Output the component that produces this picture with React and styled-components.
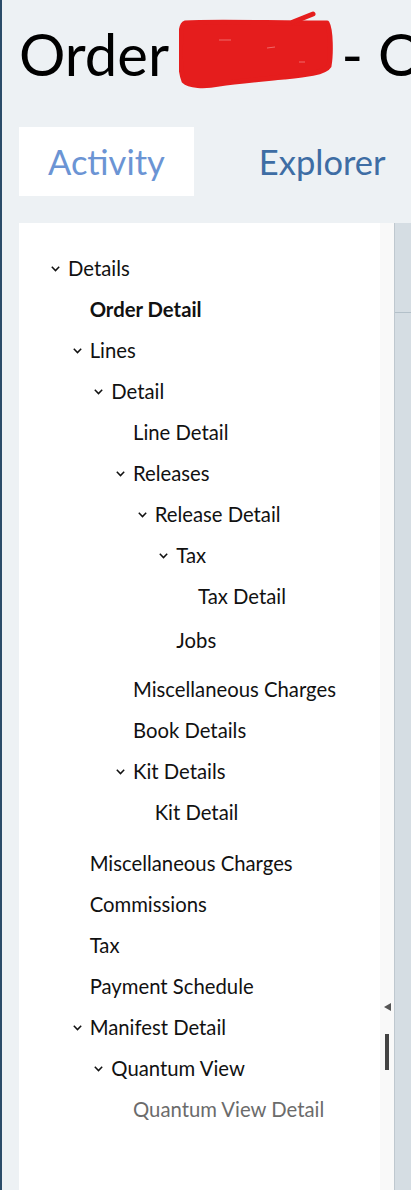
import React from "react";
import styled, { createGlobalStyle } from "styled-components";

const GlobalStyle = createGlobalStyle`
  html, body { margin: 0; padding: 0; }
  body { background: #edf1f4; font-family: Lato, "Open Sans", sans-serif; }
  * { box-sizing: border-box; }
`;

const Page = styled.div`
  height: 100vh;
  display: flex;
  flex-direction: column;
  border-left: 2px solid #2b4c69;
  padding-left: 17px;
  overflow: hidden;
  background: #edf1f4;
`;

const Title = styled.h1`
  margin: 0;
  padding-top: 20px;
  display: flex;
  align-items: flex-start;
  white-space: pre;
  font-family: Lato, sans-serif;
  font-weight: 400;
  font-size: 58px;
  line-height: 68px;
  color: #000;
`;

const Redaction = styled.svg`
  flex: none;
  margin-left: -4px;
  margin-right: -6px;
  margin-top: -10px;
`;

const Tabs = styled.div`
  display: flex;
  gap: 36px;
  margin-top: 37px;
`;

const Tab = styled.div`
  height: 69px;
  display: flex;
  align-items: center;
  padding: 0 29px;
  font-family: Lato, sans-serif;
  font-size: 34.5px;
  color: ${(p) => (p.$active ? "#6b94d4" : "#3e6da4")};
  background: ${(p) => (p.$active ? "#ffffff" : "transparent")};
`;

const Workspace = styled.div`
  flex: 1;
  display: flex;
  margin-top: 27px;
  min-height: 0;
`;

const TreePanel = styled.div`
  width: 361px;
  flex: none;
  background: #ffffff;
  padding-top: 25px;
`;

const Splitter = styled.div`
  width: 14px;
  flex: none;
  background: #f9f9f9;
  display: flex;
  flex-direction: column;
  padding-top: 780px;
`;

const CollapseArrow = styled.div`
  margin-left: 4px;
  width: 0;
  height: 0;
  border-top: 4px solid transparent;
  border-bottom: 4px solid transparent;
  border-right: 7px solid #555;
`;

const Grip = styled.div`
  margin-left: 5px;
  margin-top: 23px;
  width: 4px;
  height: 36px;
  background: #444;
`;

const SidePanel = styled.div`
  flex: 1;
  background: #d5dde3;
  border-left: 1px solid #bfc8cf;
`;

const SideHeader = styled.div`
  height: 90px;
  border-bottom: 1px solid #b3c0c9;
`;

const Group = styled.div`
  padding-bottom: ${(p) => p.$pad || 0}px;
`;

const Row = styled.div`
  height: 41px;
  display: flex;
  align-items: center;
  padding-left: ${(p) => 32 + p.$level * 21.67}px;
  font-family: Lato, sans-serif;
  font-size: 20.3px;
  line-height: 41px;
  white-space: nowrap;
  color: ${(p) => (p.$muted ? "#6b6b6b" : "#111111")};
  font-weight: ${(p) => (p.$bold ? 700 : 400)};
`;

const Toggle = styled.span`
  width: 17px;
  flex: none;
  display: flex;
  align-items: center;
`;

const Chevron = () => (
  <svg width="9" height="6" viewBox="0 0 9 6" fill="none">
    <path d="M0.8 0.8 L4.5 4.6 L8.2 0.8" stroke="#111" strokeWidth="1.5" />
  </svg>
);

const tree = [
  {
    label: "Details",
    children: [
      { label: "Order Detail", bold: true },
      {
        label: "Lines",
        pad: 4,
        children: [
          {
            label: "Detail",
            pad: 3,
            children: [
              { label: "Line Detail" },
              {
                label: "Releases",
                pad: 4,
                children: [
                  {
                    label: "Release Detail",
                    pad: 4,
                    children: [
                      { label: "Tax", pad: 3, children: [{ label: "Tax Detail" }] },
                      { label: "Jobs" },
                    ],
                  },
                ],
              },
              { label: "Miscellaneous Charges" },
              { label: "Book Details" },
              { label: "Kit Details", pad: 3, children: [{ label: "Kit Detail" }] },
            ],
          },
        ],
      },
      { label: "Miscellaneous Charges" },
      { label: "Commissions" },
      { label: "Tax" },
      { label: "Payment Schedule" },
      {
        label: "Manifest Detail",
        children: [
          {
            label: "Quantum View",
            children: [{ label: "Quantum View Detail", muted: true }],
          },
        ],
      },
    ],
  },
];

const TreeNode = ({ node, level }) => (
  <>
    <Row $level={level} $bold={node.bold} $muted={node.muted}>
      <Toggle>{node.children ? <Chevron /> : null}</Toggle>
      {node.label}
    </Row>
    {node.children && (
      <Group $pad={node.pad}>
        {node.children.map((c, i) => (
          <TreeNode key={i} node={c} level={level + 1} />
        ))}
      </Group>
    )}
  </>
);

export default function App() {
  return (
    <>
      <GlobalStyle />
      <Page>
        <Title>
          <span>Order </span>
          <Redaction width="154" height="80" viewBox="0 0 154 80">
            <path
              d="M6 13 C30 11, 90 13, 148 13 C152 20, 152 45, 150 56 C146 63, 125 65, 105 67 C85 69, 60 71, 40 74 C25 77, 10 76, 5 71 C1 61, 1 40, 2 26 C2 19, 3 14, 6 13 Z"
              fill="#e51d1d"
              stroke="#e51d1d"
              strokeWidth="5"
              strokeLinejoin="round"
            />
            <path d="M114 12 L134 4" stroke="#e51d1d" strokeWidth="5" strokeLinecap="round" />
            <path d="M40 30 L52 30 M88 38 L96 37 M120 52 L126 52" stroke="#f06a6a" strokeWidth="1" />
          </Redaction>
          <span> - Overview</span>
        </Title>
        <Tabs>
          <Tab $active>Activity</Tab>
          <Tab>Explorer</Tab>
        </Tabs>
        <Workspace>
          <TreePanel>
            {tree.map((n, i) => (
              <TreeNode key={i} node={n} level={0} />
            ))}
          </TreePanel>
          <Splitter>
            <CollapseArrow />
            <Grip />
          </Splitter>
          <SidePanel>
            <SideHeader />
          </SidePanel>
        </Workspace>
      </Page>
    </>
  );
}
